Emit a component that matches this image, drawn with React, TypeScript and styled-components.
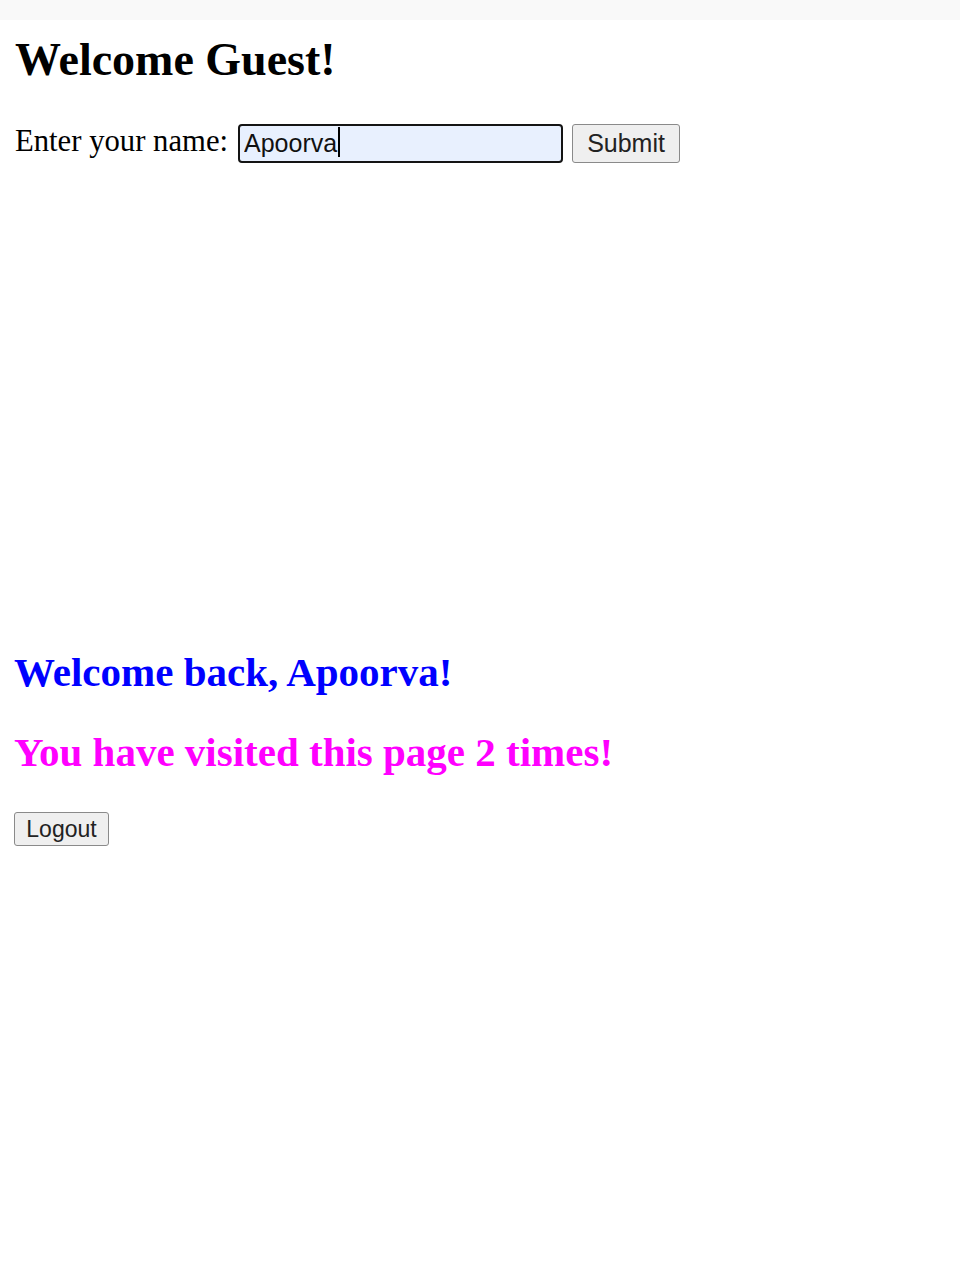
import React from "react";
import styled, { createGlobalStyle } from "styled-components";

const GlobalStyle = createGlobalStyle`
  html, body {
    margin: 0;
    padding: 0;
    background: #ffffff;
  }
  body {
    font-family: "Liberation Serif", "Times New Roman", serif;
    color: #000;
  }
`;

const TopBand = styled.div`
  height: 20px;
  background: #f9f9f9;
`;

const Page = styled.main`
  display: flex;
  flex-direction: column;
  padding: 0 0 0 14px;
`;

const GuestSection = styled.section`
  display: flex;
  flex-direction: column;
  padding-left: 1px;
`;

const Title = styled.h1`
  margin: 16.5px 0 0 0;
  font-size: 46px;
  line-height: 46px;
  font-weight: bold;
`;

const Form = styled.form`
  display: flex;
  align-items: flex-start;
  margin-top: 41.5px;
  height: 39px;
`;

const Label = styled.label`
  font-size: 30.7px;
  line-height: 34px;
  margin-right: 10px;
  white-space: nowrap;
`;

const FieldWrap = styled.div`
  position: relative;
  margin-right: 9px;
`;

const NameInput = styled.input`
  box-sizing: border-box;
  width: 325px;
  height: 39px;
  border: 2px solid #141414;
  border-radius: 4px;
  background: #e8f0fe;
  padding: 0 0 0 4px;
  margin: 0;
  font-family: "Liberation Sans", Arial, sans-serif;
  font-size: 25px;
  color: #111;
  outline: none;
`;

const Caret = styled.span`
  position: absolute;
  left: 100px;
  top: 3px;
  width: 2px;
  height: 30px;
  background: #000;
`;

const Button = styled.button<{ $w: number; $h: number; $fs: number }>`
  box-sizing: border-box;
  width: ${(p) => p.$w}px;
  height: ${(p) => p.$h}px;
  border: 1px solid #8a8a8a;
  border-radius: 3px;
  background: #efefef;
  color: #222;
  font-family: "Liberation Sans", Arial, sans-serif;
  font-size: ${(p) => p.$fs}px;
  padding: 0;
  margin: 0;
  display: flex;
  align-items: center;
  justify-content: center;
`;

const UserSection = styled.section`
  display: flex;
  flex-direction: column;
  align-items: flex-start;
  margin-top: 488.5px;
`;

const Message = styled.h2<{ $color: string; $top: number }>`
  margin: ${(p) => p.$top}px 0 0 0;
  font-size: 41px;
  line-height: 40px;
  font-weight: bold;
  color: ${(p) => p.$color};
  white-space: nowrap;
`;

const LogoutRow = styled.div`
  margin-top: 40.5px;
`;

export default function App() {
  return (
    <>
      <GlobalStyle />
      <TopBand />
      <Page>
        <GuestSection>
          <Title>Welcome Guest!</Title>
          <Form onSubmit={(e) => e.preventDefault()}>
            <Label htmlFor="name">Enter your name:</Label>
            <FieldWrap>
              <NameInput id="name" type="text" defaultValue="Apoorva" />
              <Caret />
            </FieldWrap>
            <Button type="submit" $w={108} $h={39} $fs={25}>
              Submit
            </Button>
          </Form>
        </GuestSection>
        <UserSection>
          <Message $color="#0000ff" $top={0}>
            Welcome back, Apoorva!
          </Message>
          <Message $color="#ff00ff" $top={40}>
            You have visited this page 2 times!
          </Message>
          <LogoutRow>
            <Button type="button" $w={95} $h={34} $fs={23}>
              Logout
            </Button>
          </LogoutRow>
        </UserSection>
      </Page>
    </>
  );
}
